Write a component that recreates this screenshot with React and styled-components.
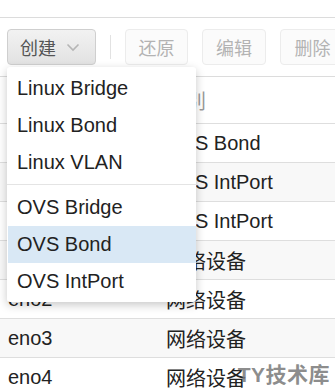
import React from 'react'
import styled, { createGlobalStyle } from 'styled-components'

const Global = createGlobalStyle`
  html, body { margin: 0; padding: 0; background: #fff; }
  body {
    font-family: "Liberation Sans", Arial, "Noto Sans CJK SC", sans-serif;
    overflow: hidden;
  }
`

const Page = styled.div`
  position: relative;
  width: 335px;
  height: 391px;
  overflow: hidden;
`

const TopStrip = styled.div`
  height: 17px;
  border-bottom: 1px solid #dcdcdc;
`

const Toolbar = styled.div`
  display: flex;
  align-items: center;
  height: 58px;
  padding-left: 7px;
  gap: 14px;
  border-bottom: 1px solid #dcdcdc;
  white-space: nowrap;
`

const ToolButton = styled.div`
  box-sizing: border-box;
  height: 36px;
  display: flex;
  align-items: center;
  gap: 10px;
  padding: 0 ${p => (p.$menu ? '12px' : '14px')};
  border-radius: 4px;
  font-size: 18px;
  flex-shrink: 0;
  color: ${p => (p.$menu ? '#555' : '#b3b3b3')};
  border: 1px solid ${p => (p.$menu ? '#cfcfcf' : '#ececec')};
  background: ${p => (p.$menu ? 'linear-gradient(#f2f2f2, #e2e2e2)' : '#fbfbfb')};
  width: ${p => p.$w || 'auto'};
  justify-content: ${p => (p.$menu ? 'flex-start' : 'center')};
`

const Separator = styled.div`
  width: 1px;
  height: 24px;
  background: #e2e2e2;
  flex-shrink: 0;
`

const Table = styled.div`
  display: flex;
  flex-direction: column;
`

const Row = styled.div`
  display: grid;
  grid-template-columns: 158px 1fr;
  align-items: center;
  height: ${p => (p.$head ? '46px' : '38px')};
  border-bottom: 1px solid #dedede;
  background: ${p => (p.$alt ? '#f8f8f8' : '#fff')};
  font-size: 20px;
  color: ${p => (p.$head ? '#9a9a9a' : '#222')};
`

const Cell = styled.div`
  padding-left: 8px;
  white-space: nowrap;
`

const Menu = styled.div`
  position: absolute;
  left: 7px;
  top: 67px;
  width: 189px;
  padding: 3px 0 2px;
  background: #fff;
  border-radius: 3px;
  box-shadow: 0 3px 10px rgba(0, 0, 0, 0.22);
  z-index: 2;
`

const MenuItem = styled.div`
  height: 37px;
  display: flex;
  align-items: center;
  padding-left: 9px;
  margin-left: 1px;
  font-size: 20px;
  color: #222;
  background: ${p => (p.$active ? '#d9e8f5' : 'transparent')};
`

const MenuDivider = styled.div`
  height: 1px;
  margin: 3px 0 4px;
  background: #e4e4e4;
`

const Watermark = styled.div`
  position: absolute;
  right: 5px;
  bottom: 3px;
  font-size: 21px;
  font-weight: bold;
  color: rgba(120, 120, 120, 0.85);
  font-family: "Liberation Sans", "Noto Sans CJK SC", sans-serif;
  letter-spacing: 0.5px;
  z-index: 3;
`

const Chevron = () => (
  <svg width="14" height="9" viewBox="0 0 14 9">
    <path d="M1.5 1.5 L7 7 L12.5 1.5" fill="none" stroke="#b5b5b5" strokeWidth="1.6" />
  </svg>
)

const rows = [
  ['bond0', 'OVS Bond'],
  ['ovs_int0', 'OVS IntPort'],
  ['ovs_int1', 'OVS IntPort'],
  ['eno1', '网络设备'],
  ['eno2', '网络设备'],
  ['eno3', '网络设备'],
  ['eno4', '网络设备'],
]

const App = () => {
  return (
    <Page>
      <Global />
      <TopStrip />
      <Toolbar>
        <ToolButton $menu $w="89px">
          创建 <Chevron />
        </ToolButton>
        <Separator />
        <ToolButton $w="63px">还原</ToolButton>
        <ToolButton $w="64px">编辑</ToolButton>
        <ToolButton $w="65px">删除</ToolButton>
      </Toolbar>
      <Table>
        <Row $head>
          <Cell>名称</Cell>
          <Cell>类别</Cell>
        </Row>
        {rows.map((r, i) => (
          <Row key={i} $alt={i % 2 === 1}>
            <Cell>{r[0]}</Cell>
            <Cell>{r[1]}</Cell>
          </Row>
        ))}
      </Table>
      <Menu>
        <MenuItem>Linux Bridge</MenuItem>
        <MenuItem>Linux Bond</MenuItem>
        <MenuItem>Linux VLAN</MenuItem>
        <MenuDivider />
        <MenuItem>OVS Bridge</MenuItem>
        <MenuItem $active>OVS Bond</MenuItem>
        <MenuItem>OVS IntPort</MenuItem>
      </Menu>
      <Watermark>TY技术库</Watermark>
    </Page>
  )
}

export default App
